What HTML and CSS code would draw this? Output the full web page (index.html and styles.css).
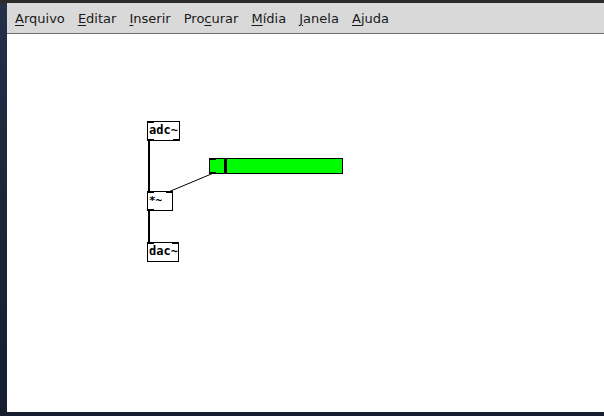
FILE: index.html
```html
<!DOCTYPE html>
<html lang="pt">
<head>
<meta charset="utf-8">
<title>Pd</title>
<link rel="stylesheet" href="styles.css">
</head>
<body>
<div class="desktop">
  <div class="window">
    <nav class="menubar">
      <span class="item"><u>A</u>rquivo</span>
      <span class="item"><u>E</u>ditar</span>
      <span class="item"><u>I</u>nserir</span>
      <span class="item">Pro<u>c</u>urar</span>
      <span class="item"><u>M</u>ídia</span>
      <span class="item"><u>J</u>anela</span>
      <span class="item"><u>A</u>juda</span>
    </nav>
    <div class="canvas">
      <svg class="wires" width="597" height="378" viewBox="0 0 597 378">
        <line x1="142" y1="107" x2="142" y2="157" stroke="#000" stroke-width="2"/>
        <line x1="142" y1="177" x2="142" y2="208" stroke="#000" stroke-width="2"/>
        <line x1="205.5" y1="139.5" x2="162.5" y2="157.5" stroke="#000" stroke-width="1"/>
      </svg>
      <div class="obj adc"><span class="in l"></span><span class="out l"></span><span class="out r"></span>adc~</div>
      <div class="obj mul"><span class="in l"></span><span class="in r"></span><span class="out l"></span>*~</div>
      <div class="obj dac"><span class="in l"></span><span class="in r"></span>dac~</div>
      <div class="slider"><span class="in l"></span><span class="out l"></span><span class="knob"></span></div>
    </div>
  </div>
</div>
</body>
</html>
```
FILE: styles.css
```css
html, body {
  margin: 0;
  padding: 0;
  width: 604px;
  height: 416px;
  overflow: hidden;
}
.desktop {
  width: 604px;
  height: 416px;
  background: linear-gradient(180deg, #243047 0%, #1b253a 50%, #161e30 100%);
  padding-top: 3px;
  padding-left: 7px;
  box-sizing: border-box;
  position: relative;
}
.desktop::before {
  content: "";
  position: absolute;
  left: 0;
  top: 0;
  width: 604px;
  height: 3px;
  background: #2a2a2a;
}
.window {
  width: 597px;
  height: 409px;
  background: #fff;
  display: flex;
  flex-direction: column;
}
.menubar {
  height: 31px;
  background: #d9d9d9;
  border-bottom: 1px solid #6f6f6f;
  display: flex;
  align-items: center;
  gap: 13.1px;
  padding-left: 8px;
  box-sizing: border-box;
  font-family: "DejaVu Sans", sans-serif;
  font-size: 13px;
  color: #1a1a1a;
}
.menubar .item {
  line-height: 16px;
  padding-top: 2px;
}
.menubar u {
  text-underline-offset: 2px;
}
.canvas {
  flex: 1;
  position: relative;
  background: #fff;
}
.wires {
  position: absolute;
  left: 0;
  top: 0;
}
.obj {
  position: absolute;
  box-sizing: border-box;
  height: 20px;
  border: 1px solid #000;
  background: #fff;
  font-family: "DejaVu Sans Mono", monospace;
  font-weight: bold;
  font-size: 12px;
  line-height: 17px;
  padding-left: 1px;
  color: #000;
}
.adc { left: 140px; top: 87px; width: 33px; }
.mul { left: 140px; top: 157px; width: 26px; font-size: 11px; }
.dac { left: 140px; top: 208px; width: 32px; }
.in, .out {
  position: absolute;
  width: 7px;
  height: 2px;
  background: #000;
}
.in { top: -1px; }
.out { bottom: -1px; }
.l { left: -1px; }
.r { right: -1px; }
.slider {
  position: absolute;
  left: 202px;
  top: 124px;
  width: 134px;
  height: 16px;
  box-sizing: border-box;
  border: 1px solid #000;
  background: #00fc00;
}
.knob {
  position: absolute;
  left: 14px;
  top: 0;
  width: 3px;
  height: 14px;
  background: #000;
}
```
